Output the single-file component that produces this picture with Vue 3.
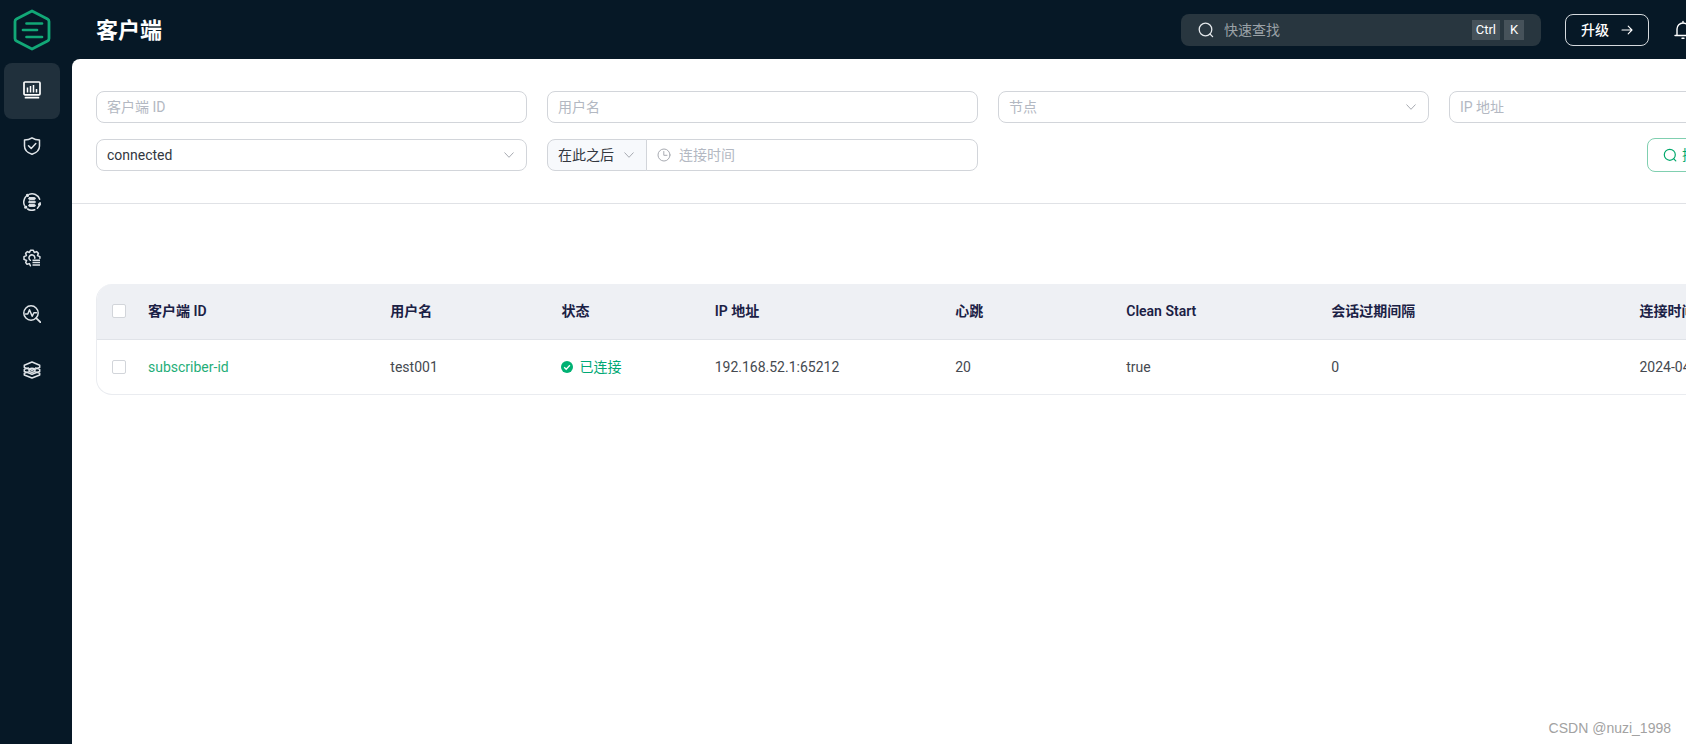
<script setup>
import { ref } from 'vue'

const clientId = ref('')
const username = ref('')
const ip = ref('')
const node = ref('')
const status = ref('connected')
const range = ref('after')
const connectedAt = ref('')
const quick = ref('')

const navItems = ['monitor', 'shield', 'data', 'settings', 'diagnose', 'system']
const navLabels = {
  monitor: '监控',
  shield: '访问控制',
  data: '集成',
  settings: '管理',
  diagnose: '问题分析',
  system: '系统设置',
}
const clients = [
  {
    id: 'subscriber-id',
    username: 'test001',
    status: '已连接',
    ip: '192.168.52.1:65212',
    keepalive: '20',
    cleanStart: 'true',
    expiry: '0',
    connectedAt: '2024-04-10 10:24:36',
  },
]
</script>

<template>
  <div class="viewport">
    <aside class="sidebar">
      <a class="logo" href="#" aria-label="EMQX">
        <svg width="38" height="42" viewBox="0 0 38 42" fill="none" stroke="#12a877" stroke-linecap="round" stroke-linejoin="round">
          <path d="M19 2 L34.500 10 Q36 10.800 36 12.500 V29.500 Q36 31.200 34.500 32 L19 40 L3.500 32 Q2 31.200 2 29.500 V12.500 Q2 10.800 3.500 10 Z" stroke-width="2.800" />
          <path d="M13.500 14.500H29M10 21H24M13.500 28H29" stroke-width="2.700" />
        </svg>
      </a>
      <nav class="nav">
        <a v-for="item in navItems" :key="item" href="#" class="nav-item" :class="{ active: item === 'monitor' }" :aria-label="navLabels[item]">
          <svg width="18" height="18" viewBox="0 0 18 18" fill="none" stroke="currentColor" stroke-width="1.500" stroke-linecap="round" stroke-linejoin="round">
            <template v-if="item === 'monitor'">
              <rect x="1" y="1" width="16" height="12.800" rx="1" stroke-width="1.700" />
              <path d="M4.500 6.500V11.500M7.500 5V11.500M10.500 4V11.500M13.500 8V11.500" stroke-linecap="butt" />
              <path d="M2.500 16.700H15.500" stroke-width="1.700" />
            </template>
            <template v-else-if="item === 'shield'">
              <path d="M9 .8C6.800 2.200 4.200 2.900 1.500 3V9C1.500 12.800 4.600 15.900 9 17.300C13.400 15.900 16.500 12.800 16.500 9V3C13.800 2.900 11.200 2.200 9 .8Z" />
              <path d="M5.500 8.700L8.200 11.400L12.800 6.600" />
            </template>
            <template v-else-if="item === 'data'">
              <path d="M1.400 12.200A8.200 8.200 0 0 1 2.700 3.800M6 1.400A8.200 8.200 0 0 1 16.700 6.200M17.100 9.800A8.200 8.200 0 0 1 14.400 15.200M11.800 16.800A8.200 8.200 0 0 1 4.600 16" />
              <circle cx="4.400" cy="2.400" r=".9" fill="currentColor" />
              <circle cx="2.700" cy="14.200" r=".9" fill="currentColor" />
              <circle cx="16.500" cy="11.200" r=".8" fill="currentColor" />
              <rect x="5.600" y="4.600" width="6.800" height="1.800" rx=".9" fill="currentColor" stroke-width="1" />
              <rect x="5.600" y="8.200" width="6.800" height="1.600" rx=".8" fill="currentColor" stroke-width="1" />
              <rect x="5.600" y="11.600" width="6.800" height="1.800" rx=".9" fill="currentColor" stroke-width="1" />
            </template>
            <template v-else-if="item === 'settings'">
              <path d="M7.400 16.800L6.400 14.600L4 15.300L2.700 13.600L3.600 11.500L1 10.400V7.600L3.400 6.600L2.600 4.300L4.400 2.600L6.500 3.500L7.500 1.200H10.300L11.300 3.500L13.600 2.600L15.400 4.400L14.500 6.600L16.900 7.600V9.300" />
              <path d="M7.400 11.300A2.900 2.900 0 1 1 11.800 9.200" />
              <path d="M9.500 11.200H17M9.500 13.600H17M9.500 16H17" stroke-linecap="butt" />
            </template>
            <template v-else-if="item === 'diagnose'">
              <circle cx="8" cy="8" r="7.200" />
              <path d="M13.200 13.200L17.600 17.400" stroke-width="1.800" />
              <path d="M2.500 9H4.800L6.500 4.800L9.200 11.300L10.900 7.700H13.500" />
            </template>
            <template v-else>
              <path d="M2 7L1.300 6.400V4.200L9 1L16.700 4.200V6.400L9 9.200L1.300 6.400" />
              <path d="M5.500 6.900L1.300 8.400V10.400L9 13.300L16.700 10.400V8.400L12.500 6.900" />
              <path d="M5.500 10.900L1.300 12.200V14L9 17L16.700 14V12.200L12.500 10.900" />
              <ellipse cx="9" cy="9.200" rx="3" ry="2" />
            </template>
          </svg>
        </a>
      </nav>
    </aside>

    <div class="page">
      <header class="topbar">
        <h1>客户端</h1>
        <label class="quick">
          <svg width="16" height="16" viewBox="0 0 16 16" fill="none" stroke="#e4e8eb" stroke-width="1.300" stroke-linecap="round">
            <circle cx="7.500" cy="7.500" r="6.300" />
            <path d="M12 12L14.600 14.600" />
          </svg>
          <input v-model="quick" type="text" placeholder="快速查找" aria-label="快速查找" />
          <kbd>Ctrl</kbd><kbd>K</kbd>
        </label>
        <button type="button" class="upgrade">
          升级
          <svg width="12" height="12" viewBox="0 0 12 12" fill="none" stroke="currentColor" stroke-width="1.100" stroke-linecap="round" stroke-linejoin="round">
            <path d="M1 6H11M7.200 2.200L11 6L7.200 9.800" />
          </svg>
        </button>
        <button type="button" class="bell" aria-label="通知">
          <svg width="20" height="20" viewBox="0 0 20 20" fill="none" stroke="currentColor" stroke-width="1.400" stroke-linecap="round" stroke-linejoin="round">
            <path d="M2 15.500H18M4 15.500V9A6 6 0 0 1 16 9V15.500M10 3V1.500M9 18.300H11" />
          </svg>
        </button>
      </header>

      <main class="content">
        <form class="filters" @submit.prevent>
          <input v-model="clientId" class="field" type="text" placeholder="客户端 ID" aria-label="客户端 ID" />
          <input v-model="username" class="field" type="text" placeholder="用户名" aria-label="用户名" />
          <div class="select-wrap">
            <select v-model="node" class="field empty" aria-label="节点">
              <option value="">节点</option>
            </select>
            <svg class="chevron" width="12" height="12" viewBox="0 0 12 12"><path d="M1.500 3.500L6 8.300L10.500 3.500" /></svg>
          </div>
          <input v-model="ip" class="field" type="text" placeholder="IP 地址" aria-label="IP 地址" />
          <div class="select-wrap">
            <select v-model="status" class="field" aria-label="连接状态">
              <option value="connected">connected</option>
            </select>
            <svg class="chevron" width="12" height="12" viewBox="0 0 12 12"><path d="M1.500 3.500L6 8.300L10.500 3.500" /></svg>
          </div>
          <div class="time-group">
            <div class="select-wrap range">
              <select v-model="range" class="field" aria-label="时间范围">
                <option value="after">在此之后</option>
              </select>
              <svg class="chevron" width="12" height="12" viewBox="0 0 12 12"><path d="M1.500 3.500L6 8.300L10.500 3.500" /></svg>
            </div>
            <label class="field time">
              <svg width="14" height="14" viewBox="0 0 14 14" fill="none" stroke="#a8abb2" stroke-linecap="round">
                <circle cx="7" cy="7" r="6" />
                <path d="M6.800 3.500V7.300H10" />
              </svg>
              <input v-model="connectedAt" type="text" placeholder="连接时间" aria-label="连接时间" />
            </label>
          </div>
          <div class="actions">
            <button type="submit" class="search">
              <svg width="14" height="14" viewBox="0 0 14 14" fill="none" stroke="currentColor" stroke-width="1.200" stroke-linecap="round">
                <circle cx="6.800" cy="6.800" r="5.500" />
                <path d="M10.800 10.800L12.800 12.800" />
              </svg>
              搜索
            </button>
          </div>
        </form>

        <section class="list">
          <table>
            <colgroup>
              <col class="c-check" /><col class="c-id" /><col class="c-user" /><col class="c-status" /><col class="c-ip" />
              <col class="c-keep" /><col class="c-clean" /><col class="c-expiry" /><col />
            </colgroup>
            <thead>
              <tr>
                <th class="check"><input type="checkbox" aria-label="全选" /></th>
                <th>客户端 ID</th>
                <th>用户名</th>
                <th>状态</th>
                <th>IP 地址</th>
                <th>心跳</th>
                <th>Clean Start</th>
                <th>会话过期间隔</th>
                <th>连接时间</th>
              </tr>
            </thead>
            <tbody>
              <tr v-for="c in clients" :key="c.id">
                <td class="check"><input type="checkbox" :aria-label="c.id" /></td>
                <td><a href="#">{{ c.id }}</a></td>
                <td>{{ c.username }}</td>
                <td>
                  <span class="status">
                    <svg width="12" height="12" viewBox="0 0 12 12"><circle cx="6" cy="6" r="6" fill="#00b173" /><path d="M3.200 6.200L5.200 8.200L8.900 4.300" fill="none" stroke="#fff" stroke-width="1.300" /></svg>
                    {{ c.status }}
                  </span>
                </td>
                <td>{{ c.ip }}</td>
                <td>{{ c.keepalive }}</td>
                <td>{{ c.cleanStart }}</td>
                <td>{{ c.expiry }}</td>
                <td>{{ c.connectedAt }}</td>
              </tr>
            </tbody>
          </table>
        </section>
      </main>
    </div>
    <span class="watermark">CSDN @nuzi_1998</span>
  </div>
</template>

<style>
body {
  margin: 0;
  background: #061826;
}
</style>

<style scoped>
.viewport,
.viewport * {
  box-sizing: border-box;
}
.viewport {
  --overhang: 218px;
  position: relative;
  display: flex;
  min-height: 100vh;
  overflow: hidden;
  background: #061826;
  color: #454950;
  font-family: Roboto, "Noto Sans CJK SC", sans-serif;
  font-size: 14px;
  line-height: 20px;
}
input,
select,
button,
kbd {
  font: inherit;
  color: inherit;
}
a {
  color: #1fae78;
  text-decoration: none;
}
svg {
  flex: none;
}

/* Sidebar */
.sidebar {
  flex: none;
  width: 72px;
}
.logo {
  display: flex;
  justify-content: center;
  padding: 9px 8px 12px 0;
}
.nav {
  display: flex;
  flex-direction: column;
  padding: 0 12px 0 4px;
}
.nav-item {
  display: flex;
  align-items: center;
  justify-content: center;
  height: 56px;
  padding-bottom: 2px;
  border-radius: 8px;
  color: #dfe4e8;
}
.nav-item.active {
  background: #20303c;
  color: #fff;
}

/* Page column runs past the right edge of the window */
.page {
  flex: none;
  display: flex;
  flex-direction: column;
  width: calc(100% - 72px + var(--overhang));
}
.topbar {
  display: flex;
  align-items: center;
  height: 59px;
  padding: 0 211px 0 24px;
}
h1 {
  margin: 0 auto 0 0;
  padding-top: 2px;
  color: #fff;
  font-size: 22px;
  line-height: 32px;
  font-weight: 700;
}
.quick {
  display: flex;
  align-items: center;
  width: 360px;
  height: 32px;
  padding: 0 17px;
  border-radius: 8px;
  background: #28363f;
}
.quick input {
  flex: 1;
  min-width: 0;
  margin-left: 10px;
  padding: 0;
  border: 0;
  outline: 0;
  background: none;
  color: #fff;
}
.quick input::placeholder {
  color: #9ba2a7;
  opacity: 1;
}
kbd {
  margin-left: 4px;
  padding: 0 4px;
  min-width: 20px;
  text-align: center;
  background: #46525a;
  color: #fff;
  font-size: 13px;
}
.upgrade {
  display: flex;
  align-items: center;
  justify-content: center;
  gap: 12px;
  width: 84px;
  height: 32px;
  margin: 0 24px;
  padding: 0;
  border: 1px solid #d5dade;
  border-radius: 8px;
  background: none;
  color: #fff;
  font-weight: 500;
}
.bell {
  display: flex;
  width: 20px;
  padding: 0;
  border: 0;
  background: none;
  color: #fff;
}

/* Content */
.content {
  flex: 1;
  border-top-left-radius: 8px;
  background: #fff;
}
.filters {
  display: grid;
  grid-template-columns: repeat(4, 1fr);
  gap: 16px 20px;
  padding: 32px 24px;
  border-bottom: 1px solid #e0e2e6;
}
.field {
  width: 100%;
  height: 32px;
  padding: 0 10px;
  border: 1px solid #d2d5da;
  border-radius: 8px;
  outline: 0;
  background: #fff;
  color: #33373f;
}
.field::placeholder,
.time input::placeholder {
  color: #b3b8c2;
  opacity: 1;
}
select.field {
  appearance: none;
}
select.empty {
  color: #b3b8c2;
}
.select-wrap {
  position: relative;
}
.chevron {
  position: absolute;
  top: 10px;
  right: 12px;
  fill: none;
  stroke: #a8abb2;
  pointer-events: none;
}
.time-group {
  display: flex;
}
.range {
  flex: none;
  width: 100px;
}
.range .field {
  border-radius: 8px 0 0 8px;
  background: #f7f9fc;
}
.time {
  display: flex;
  align-items: center;
  gap: 8px;
  margin-left: -1px;
  border-radius: 0 8px 8px 0;
}
.time input {
  flex: 1;
  min-width: 0;
  padding: 0;
  border: 0;
  outline: 0;
  background: none;
}
.actions {
  display: flex;
  align-items: center;
  grid-column: 4;
  height: 32px;
  padding-left: 198px;
}
.search {
  display: flex;
  flex: none;
  align-items: center;
  gap: 5px;
  height: 34px;
  padding: 0 15px;
  border: 1px solid #80cfb0;
  border-radius: 8px;
  background: #fff;
  color: #00a86b;
}

/* Table */
.list {
  margin: 80px 24px 24px;
  border: 1px solid #eaecf0;
  border-top: 0;
  border-radius: 16px;
  overflow: hidden;
}
table {
  width: 100%;
  table-layout: fixed;
  border-collapse: collapse;
}
th,
td {
  padding: 0;
  text-align: left;
  white-space: nowrap;
}
th {
  height: 55px;
  padding-bottom: 1px;
  border-bottom: 1px solid #e0e3e8;
  background: #eef0f4;
  color: #1b2145;
  font-weight: 600;
}
td {
  height: 55px;
}
.c-check {
  width: 51px;
}
.c-id {
  width: 13.6%;
}
.c-user,
.c-keep {
  width: 9.6%;
}
.c-status {
  width: 8.6%;
}
.c-ip {
  width: 13.5%;
}
.c-clean {
  width: 11.5%;
}
.c-expiry {
  width: 17.3%;
}
.check {
  padding-left: 15px;
}
.check input {
  display: block;
  appearance: none;
  width: 14px;
  height: 14px;
  margin: 0;
  border: 1px solid #d2d5da;
  border-radius: 2px;
  background: #fff;
}
.status {
  display: flex;
  align-items: center;
  gap: 6px;
  color: #00a874;
}
.watermark {
  position: absolute;
  right: 15px;
  bottom: 6px;
  color: #a2a2a2;
  font-family: "Liberation Sans", Arial, sans-serif;
  font-size: 14px;
}
</style>
